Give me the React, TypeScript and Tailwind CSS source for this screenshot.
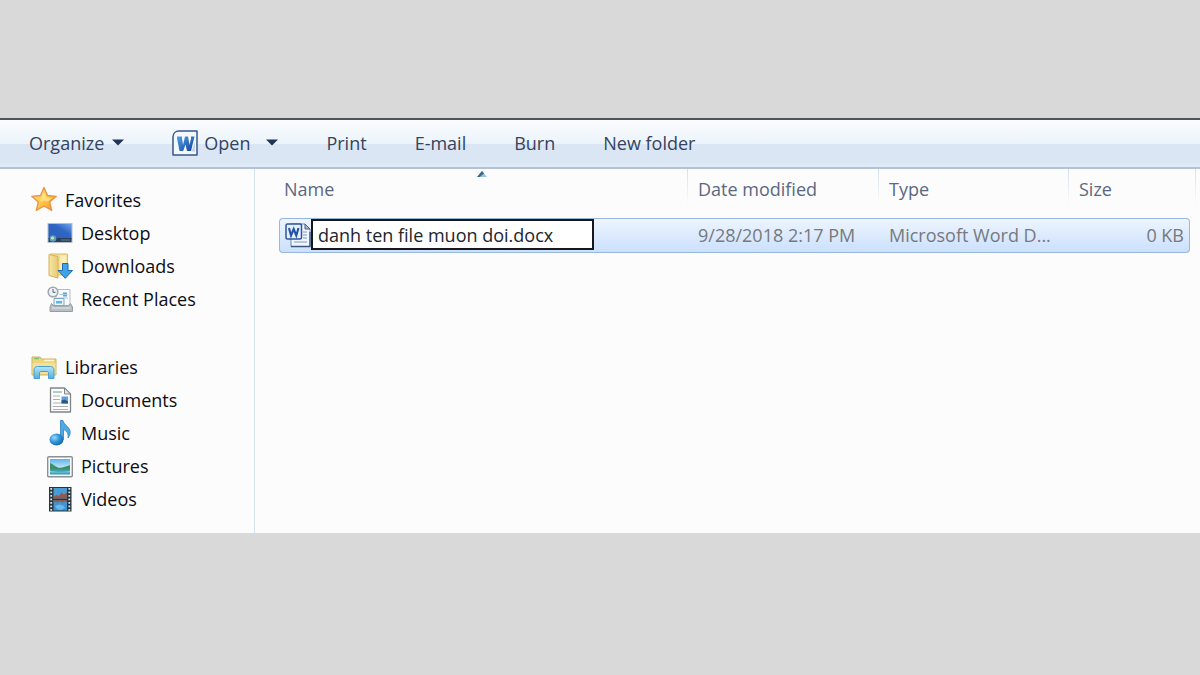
import { ReactNode, useState } from "react";

interface NavItem {
    label: string;
    icon: ReactNode;
}

interface NavGroup extends NavItem {
    items: NavItem[];
}

function StarIcon() {
    return (
        <svg viewBox="0 0 26 26" className="h-[26px] w-[26px] shrink-0" aria-hidden="true">
            <defs>
                <linearGradient id="star" x1="0" y1="0" x2="1" y2="1">
                    <stop offset="0" stopColor="#ffe98a" />
                    <stop offset="0.5" stopColor="#ffc84a" />
                    <stop offset="1" stopColor="#f6921e" />
                </linearGradient>
            </defs>
            <path d="M13 0.500l3.500 8 8.800.8-6.600 5.700 2 8.500L13 19l-7.700 4.500 2-8.500L.7 9.300l8.800-.8z" fill="url(#star)" stroke="#e8924a" strokeWidth="1.300" strokeLinejoin="round" />
            <path d="M13 5l2.200 5.500 5.500.6-4.200 3.700-3.500-1.300-4 1.500 1-4z" fill="#fff0a0" opacity="0.6" />
        </svg>
    );
}

function DesktopIcon() {
    return (
        <svg viewBox="0 0 26 26" className="h-[26px] w-[26px] shrink-0" aria-hidden="true">
            <defs>
                <linearGradient id="screen" x1="0" y1="1" x2="1" y2="0">
                    <stop offset="0" stopColor="#2a5fb8" />
                    <stop offset="0.6" stopColor="#2f66c4" />
                    <stop offset="1" stopColor="#6ea4e8" />
                </linearGradient>
            </defs>
            <rect x="0.500" y="3" width="25" height="20" fill="#b4bfcc" />
            <rect x="1.500" y="4" width="23" height="15" fill="url(#screen)" />
            <rect x="1.500" y="18" width="23" height="4" fill="#2c3f5a" />
            <path d="M14 20h9" stroke="#6b7f96" strokeWidth="1" />
            <circle cx="6" cy="18.500" r="3.300" fill="#5d9ac0" />
            <circle cx="5.500" cy="18" r="1.600" fill="#c9e8a0" />
        </svg>
    );
}

function DownloadsIcon() {
    return (
        <svg viewBox="0 0 26 26" className="h-[26px] w-[26px] shrink-0" aria-hidden="true">
            <defs>
                <linearGradient id="folder" x1="0" y1="0" x2="1" y2="0">
                    <stop offset="0" stopColor="#f7e7a8" />
                    <stop offset="1" stopColor="#e8ca70" />
                </linearGradient>
            </defs>
            <path d="M3 1h17.500v21H3z" fill="#f5e09a" stroke="#d8bd66" />
            <path d="M13.500 2.500h5.500v18h-5.500z" fill="#fbeeb8" />
            <path d="M2 1.500l9 2v21.500l-9-2.500z" fill="url(#folder)" stroke="#d1b35a" />
            <path d="M15.500 10.500h5.500v7h4.500L18.300 25.300 11 17.500h4.500z" fill="#3fa4e6" stroke="#1b6cb5" strokeLinejoin="round" />
        </svg>
    );
}

function RecentIcon() {
    return (
        <svg viewBox="0 0 26 26" className="h-[26px] w-[26px] shrink-0" aria-hidden="true">
            <path d="M9 3.500h14v16H9z" fill="#f8fbfd" stroke="#b3bcc5" />
            <path d="M16 6.500h4v4h-4z" fill="#5ba5dc" />
            <path d="M12.500 8.500h8M11 12h10" stroke="#a9c9e4" />
            <path d="M7 12.500h10v7H7z" fill="#e8f5fc" stroke="#7ea6c2" />
            <path d="M9 15h6v2.500H9z" fill="#61b4e2" />
            <path d="M4.500 17.500L3 21v4.500h22.500V21l-2-3.500-2 2.500H7z" fill="#b9bfc5" stroke="#969da4" />
            <path d="M5 22h18.500" stroke="#e4e7ea" />
            <circle cx="6" cy="6" r="4.800" fill="#eef2f6" stroke="#9da6b0" strokeWidth="1.600" />
            <path d="M6 3v3.300h2.500" fill="none" stroke="#57606b" />
        </svg>
    );
}

function LibrariesIcon() {
    return (
        <svg viewBox="0 0 26 26" className="h-[26px] w-[26px] shrink-0" aria-hidden="true">
            <defs>
                <linearGradient id="stand" x1="0" y1="0" x2="0" y2="1">
                    <stop offset="0" stopColor="#b6e5f8" />
                    <stop offset="1" stopColor="#4fb0e0" />
                </linearGradient>
            </defs>
            <path d="M1 5V3h8l1.500 2H25v16H1z" fill="#ecd57e" stroke="#cdb45c" strokeLinejoin="round" />
            <path d="M3 4.500h5" stroke="#7bc46e" strokeWidth="1.500" />
            <path d="M13 6.500h10" stroke="#fff4c4" strokeWidth="1.500" />
            <path d="M1.500 9h23v11h-23z" fill="#f3e09a" />
            <path d="M3 24.500V16c0-2 1.500-3.500 3.500-3.500h13c2 0 3.500 1.500 3.500 3.500v8.500h-5.500V19c0-.8-.5-1.500-1.500-1.500h-6c-1 0-1.500.7-1.500 1.500v5.500z" fill="url(#stand)" stroke="#4c9fce" strokeLinejoin="round" />
        </svg>
    );
}

function DocumentsIcon() {
    return (
        <svg viewBox="0 0 26 26" className="h-[26px] w-[26px] shrink-0" aria-hidden="true">
            <path d="M3.500 1h14l6 6v18h-20z" fill="#fdfdfe" stroke="#80858c" strokeWidth="1.300" strokeLinejoin="round" />
            <path d="M17.500 1v6h6z" fill="#dfe4e9" stroke="#80858c" strokeLinejoin="round" />
            <path d="M6 5h9" stroke="#5ba095" />
            <path d="M6 9h7M6 12.500h7M6 16h8M6 19.500h15M6 22.500h15" stroke="#aab0b8" />
            <path d="M14.500 9.500h6.500v7h-6.500z" fill="#5e9ddb" />
            <path d="M14.500 13.500l3-1 3.500 2v2h-6.500z" fill="#285a86" />
        </svg>
    );
}

function MusicIcon() {
    return (
        <svg viewBox="0 0 26 26" className="h-[26px] w-[26px] shrink-0" aria-hidden="true">
            <defs>
                <radialGradient id="note" cx="0.35" cy="0.35" r="0.75">
                    <stop offset="0" stopColor="#9ad9f8" />
                    <stop offset="0.5" stopColor="#2f93d8" />
                    <stop offset="1" stopColor="#155fa8" />
                </radialGradient>
            </defs>
            <path d="M13.500 0.500h2.500c1 5 7.500 6.500 7.200 12-.1 2-1 4-2.200 5.500.8-4.500-1.200-7-4.500-8.500v10h-3z" fill="#4fa9e2" stroke="#2f82c4" strokeWidth="0.800" />
            <ellipse cx="9.500" cy="19.500" rx="7" ry="6" fill="url(#note)" />
        </svg>
    );
}

function PicturesIcon() {
    return (
        <svg viewBox="0 0 26 26" className="h-[26px] w-[26px] shrink-0" aria-hidden="true">
            <defs>
                <linearGradient id="sky" x1="0" y1="0" x2="0" y2="1">
                    <stop offset="0" stopColor="#5eb2ea" />
                    <stop offset="0.6" stopColor="#c8ecf6" />
                </linearGradient>
            </defs>
            <rect x="0.700" y="3.700" width="24.600" height="20" rx="1" fill="#fcfcfc" stroke="#8b9096" strokeWidth="1.400" />
            <rect x="3" y="6" width="20" height="15.500" fill="url(#sky)" />
            <path d="M3 10c3 1 5 3.500 8 4.500s8-1 12-2.500v5H3z" fill="#3c8f62" />
            <path d="M3 16.500h20v5H3z" fill="#3f9fb8" />
            <path d="M3 18c6 1 14 1 20 0v1.500H3z" fill="#86cbd5" />
        </svg>
    );
}

function VideosIcon() {
    return (
        <svg viewBox="0 0 26 26" className="h-[26px] w-[26px] shrink-0" aria-hidden="true">
            <rect x="2" y="1" width="22.500" height="24.500" fill="#25343d" />
            <path d="M4.200 2v23M22.300 2v23" stroke="#dbe7e4" strokeWidth="1.800" strokeDasharray="1.800 1.700" />
            <rect x="6.500" y="2" width="13.500" height="10.500" fill="#4a9bd4" />
            <rect x="6.500" y="14" width="13.500" height="10.500" fill="#3f94d2" />
            <path d="M6.500 11l3-2 2.500 1 2.500-3.500 2 2 3.500-2v6H6.500z" fill="#8e5a52" />
            <path d="M6.500 14h13.500v2l-2.500-.5-2 1-2-1-3 1-4-1z" fill="#8a5c52" />
            <path d="M8 20l4-1.500 4 1 2 2-4 2.500-4-1z" fill="#6bb9e8" />
        </svg>
    );
}

function WordIcon() {
    return (
        <svg viewBox="0 0 26 26" className="h-[26px] w-[26px] shrink-0" aria-hidden="true">
            <defs>
                <linearGradient id="word" x1="0" y1="0" x2="1" y2="1">
                    <stop offset="0" stopColor="#4fa3e6" />
                    <stop offset="1" stopColor="#123f9c" />
                </linearGradient>
            </defs>
            <path d="M7 1h18v24H1V7c0-3.500 2.500-6 6-6z" fill="#f4f8fd" stroke="#34568f" strokeWidth="1.500" strokeLinejoin="round" />
            <path d="M5 6.500h5v2l1 6.500 2-8.500h3l1.500 8.500L19 8.500v-2h3.500L19 21h-4l-1.500-6.500-2.300 6.500H7.500L5 8.500z" fill="url(#word)" />
            <path d="M19.500 21.500h3.500v-10z" fill="#c4d4ea" />
        </svg>
    );
}

function WordFileIcon() {
    return (
        <svg viewBox="0 0 26 26" className="h-[26px] w-[26px] shrink-0" aria-hidden="true">
            <path d="M6 2h14l5 5v17.500H6z" fill="#f3f7fd" stroke="#7186ad" />
            <path d="M6 24.500h19V10" fill="none" stroke="#3c5684" strokeWidth="1.300" />
            <path d="M20 2v5h5z" fill="#aebbd0" stroke="#4a5f86" />
            <path d="M18 10h4M18 13h4M18 16h4M9 20h13" stroke="#9fb6dd" strokeWidth="1.400" />
            <rect x="1" y="2" width="15.500" height="15" rx="1.500" fill="#e6effb" stroke="#2f569c" strokeWidth="1.500" />
            <path d="M4 6l2 7.500 2.700-6.500 2.600 6.500 2.200-7.500" fill="none" stroke="#2253a6" strokeWidth="2.100" />
        </svg>
    );
}

function Caret() {
    return (
        <svg viewBox="0 0 12 7" className="h-[7px] w-3 shrink-0" aria-hidden="true">
            <path d="M0 0.500h12L6 6.500z" fill="#1e3557" />
        </svg>
    );
}

const groups: NavGroup[] = [
    {
        label: "Favorites",
        icon: <StarIcon />,
        items: [
            { label: "Desktop", icon: <DesktopIcon /> },
            { label: "Downloads", icon: <DownloadsIcon /> },
            { label: "Recent Places", icon: <RecentIcon /> },
        ],
    },
    {
        label: "Libraries",
        icon: <LibrariesIcon />,
        items: [
            { label: "Documents", icon: <DocumentsIcon /> },
            { label: "Music", icon: <MusicIcon /> },
            { label: "Pictures", icon: <PicturesIcon /> },
            { label: "Videos", icon: <VideosIcon /> },
        ],
    },
];

function Toolbar() {
    return (
        <div className="flex h-[51px] items-center gap-12 border-t-2 border-b-2 border-t-[#505357] border-b-[#b3c2d5] bg-[linear-gradient(to_bottom,#fbfdff_0%,#ebf3fb_50%,#dbe6f4_51%,#dae6f4_85%,#e0ebf7_100%)] pb-0.5 pl-[29px] text-[#34435f]">
            <button type="button" className="flex items-center gap-2">
                Organize <Caret />
            </button>
            <div className="flex items-center gap-4">
                <button type="button" className="flex items-center gap-1.5">
                    <WordIcon /> Open
                </button>
                <button type="button" aria-label="Open with">
                    <Caret />
                </button>
            </div>
            {["Print", "E-mail", "Burn", "New folder"].map((label) => (
                <button key={label} type="button">
                    {label}
                </button>
            ))}
        </div>
    );
}

function Sidebar() {
    return (
        <nav className="flex w-[255px] shrink-0 flex-col gap-[35px] border-r border-[#d5e2f0] pt-[14px] pb-[18px] text-[#0c0c14]">
            {groups.map((group) => (
                <div key={group.label}>
                    <a href="#" className="flex h-[33px] items-center gap-2 pl-[31px]">
                        {group.icon} {group.label}
                    </a>
                    <ul>
                        {group.items.map((item) => (
                            <li key={item.label}>
                                <a href="#" className="flex h-[33px] items-center gap-2 pl-[47px]">
                                    {item.icon} {item.label}
                                </a>
                            </li>
                        ))}
                    </ul>
                </div>
            ))}
        </nav>
    );
}

// Column divider that fades out towards the rows
function Divider() {
    return <span className="absolute top-0 right-0 h-9 w-px bg-linear-to-b from-[#d3e0ec] to-transparent" />;
}

function FileTable() {
    const [fileName, setFileName] = useState("danh ten file muon doi.docx");

    return (
        <div className="min-w-0 flex-1 pr-[10px] pl-6">
            <table className="w-full table-fixed border-separate border-spacing-0 text-left whitespace-nowrap">
                <colgroup>
                    <col />
                    <col className="w-[191px]" />
                    <col className="w-[190px]" />
                    <col className="w-[121px]" />
                </colgroup>
                <thead>
                    <tr className="h-[49px] align-top text-[#5a6880]">
                        <th scope="col" aria-sort="ascending" className="relative pt-2 pl-[5px] font-normal">
                            Name
                            <span className="absolute inset-x-0 top-0.5 flex justify-center pr-1">
                                <svg viewBox="0 0 10 6" className="h-[6px] w-[10px]" aria-hidden="true">
                                    <path d="M5 0l5 6H0z" fill="#9cc4d8" />
                                    <path d="M5 0L0 6h2.500l4.500-3.500z" fill="#39698a" />
                                </svg>
                            </span>
                            <Divider />
                        </th>
                        <th scope="col" className="relative pt-2 pl-[10px] font-normal">
                            Date modified
                            <Divider />
                        </th>
                        <th scope="col" className="relative pt-2 pl-[10px] font-normal">
                            Type
                            <Divider />
                        </th>
                        <th scope="col" className="relative pt-2 pl-[10px] font-normal">
                            Size
                            <span className="absolute top-0 -right-[6px] h-9 w-px bg-linear-to-b from-[#d3e0ec] to-transparent" />
                        </th>
                    </tr>
                </thead>
                <tbody>
                    <tr className="h-[35px] text-[#77797d] [&>td]:border-y [&>td]:border-[#98b6de] [&>td]:bg-linear-to-b [&>td]:from-[#edf5ff] [&>td]:to-[#cbe0fc] [&>td]:pb-0.5">
                        <td className="rounded-l border-l pl-[5px]">
                            <div className="flex items-center">
                                <WordFileIcon />
                                <input
                                    type="text"
                                    aria-label="File name"
                                    value={fileName}
                                    onChange={(e) => setFileName(e.target.value)}
                                    className="h-[31px] w-[283px] border-2 border-[#16181d] bg-white px-[5px] text-[#22252c] outline-none"
                                />
                            </div>
                        </td>
                        <td className="pl-[10px]">9/28/2018 2:17 PM</td>
                        <td className="truncate pr-4 pl-[10px]">Microsoft Word D...</td>
                        <td className="rounded-r border-r pr-[5px] text-right">0 KB</td>
                    </tr>
                </tbody>
            </table>
        </div>
    );
}

export default function App() {
    return (
        <div className="min-h-screen bg-[#d9d9d9] pt-[118px] font-['Open_Sans','Noto_Sans',sans-serif] text-[18px] leading-6">
            <main className="bg-[#fcfcfc]">
                <Toolbar />
                <div className="flex">
                    <Sidebar />
                    <FileTable />
                </div>
            </main>
        </div>
    );
}
